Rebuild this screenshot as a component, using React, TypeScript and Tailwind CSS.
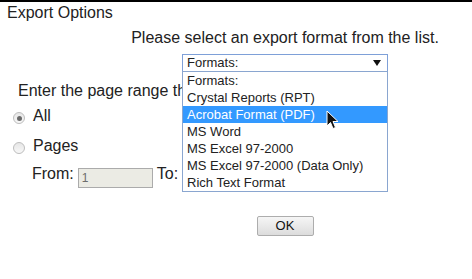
import React from 'react';

// Export dialog with the format dropdown opened
const FORMATS = [
  'Formats:',
  'Crystal Reports (RPT)',
  'Acrobat Format (PDF)',
  'MS Word',
  'MS Excel 97-2000',
  'MS Excel 97-2000 (Data Only)',
  'Rich Text Format',
];

const Radio: React.FC<{ checked?: boolean }> = ({ checked }) => (
  <span className="mt-[5px] flex h-[12px] w-[12px] shrink-0 items-center justify-center rounded-full border border-[#bdbdbd] bg-gradient-to-b from-[#e6e6e6] to-[#f8f8f8]">
    {checked && <span className="h-[5px] w-[5px] rounded-full bg-[#6a6a6a]" />}
  </span>
);

export default function App() {
  return (
    <div
      className="relative h-[279px] w-[472px] overflow-hidden border-t-2 border-black bg-white text-[16px] leading-[18px] text-[#222]"
      style={{ fontFamily: '"Liberation Sans", Arial, sans-serif' }}
    >
      {/* Title */}
      <div className="pl-[7px] pt-[2px]">Export Options</div>

      {/* Format selection */}
      <div className="flex flex-col items-center pl-[98px]">
        <div className="mt-[7px]">Please select an export format from the list.</div>
        <div className="relative z-10 mt-[7px] w-[206px]">
          <div className="flex h-[18px] items-center justify-between border border-[#7ea0d8] bg-white pl-[4px] pr-[6px] text-[13px] leading-[16px]">
            <span>Formats:</span>
            <svg width="8" height="6" viewBox="0 0 8 6">
              <path d="M0 0 H8 L4 6 Z" fill="#111" />
            </svg>
          </div>
          {/* Opened list */}
          <div className="absolute left-0 top-[17px] w-[206px] border border-[#8aa6d0] bg-white text-[13px]">
            {FORMATS.map((f, i) => (
              <div
                key={f}
                className={
                  'h-[17px] pl-[4px] leading-[17px] ' +
                  (i === 2 ? 'bg-[#3399ff] text-white' : '')
                }
              >
                {f}
              </div>
            ))}
          </div>
        </div>
      </div>

      {/* Page range */}
      <div className="mt-[10px] pl-[18px]">Enter the page range that you want to export.</div>
      <div className="mt-[7px] flex h-[18px] gap-[8px] pl-[13px]">
        <Radio checked />
        <span>All</span>
      </div>
      <div className="mt-[12px] flex h-[18px] gap-[8px] pl-[13px]">
        <Radio />
        <span>Pages</span>
      </div>
      <div className="mt-[10px] flex items-start gap-[4px] pl-[32px]">
        <span>From:</span>
        <div className="mt-[3px] h-[20px] w-[75px] border border-[#ababab] bg-[#ebebe4] pl-[3px] text-[12px] leading-[18px] text-[#6d6d6d]">
          1
        </div>
        <span>To:</span>
        <div className="mt-[3px] h-[20px] w-[75px] border border-[#ababab] bg-white" />
      </div>

      {/* OK */}
      <div className="mt-[28px] flex justify-center pl-[98px]">
        <button className="h-[20px] w-[57px] rounded-[2px] border border-[#adadad] bg-gradient-to-b from-[#f6f6f6] to-[#dcdcdc] text-[13px] leading-[18px] text-[#111]">
          OK
        </button>
      </div>

      {/* Mouse pointer */}
      <svg className="absolute left-[326px] top-[108px] z-20" width="13" height="20" viewBox="0 0 13 20">
        <path
          d="M1 1 V16 L4.5 12.5 L7 18.5 L9.5 17.5 L7 11.5 H12 Z"
          fill="#111"
          stroke="#fff"
          strokeWidth="1"
          strokeLinejoin="round"
        />
      </svg>
    </div>
  );
}
